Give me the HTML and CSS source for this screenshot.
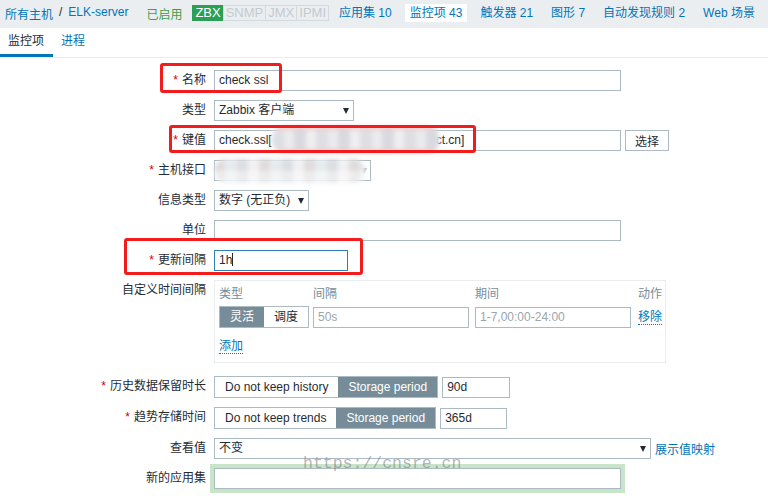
FILE: index.html
```html
<!DOCTYPE html>
<html lang="zh-CN">
<head>
<meta charset="utf-8">
<title>ELK-server 监控项</title>
<link rel="stylesheet" href="styles.css">
</head>
<body>
<header class="hdr">
  <div class="crumbs"><a href="#">所有主机</a><span class="sep">/</span><a href="#">ELK-server</a></div>
  <span class="status">已启用</span>
  <div class="badges"><span class="b zbx">ZBX</span><span class="b">SNMP</span><span class="b">JMX</span><span class="b">IPMI</span></div>
  <nav class="nav">
    <a href="#">应用集 10</a>
    <a href="#" class="cur">监控项 43</a>
    <a href="#">触发器 21</a>
    <a href="#">图形 7</a>
    <a href="#">自动发现规则 2</a>
    <a href="#">Web 场景</a>
  </nav>
</header>
<div class="tabs">
  <span class="tab active">监控项</span>
  <a href="#" class="tab">进程</a>
</div>

<form class="form">
  <label class="lbl"><span class="req">*</span>名称</label>
  <div class="fld"><div class="in w407">check ssl</div></div>

  <label class="lbl">类型</label>
  <div class="fld"><div class="sel w140">Zabbix 客户端<i class="arr"></i></div></div>

  <label class="lbl"><span class="req">*</span>键值</label>
  <div class="fld"><div class="in w407">check.ssl[<span class="gap"></span>ct.cn]</div><button type="button" class="btn">选择</button></div>

  <label class="lbl"><span class="req">*</span>主机接口</label>
  <div class="fld"><div class="sel w157"><i class="arr sm"></i></div></div>

  <label class="lbl">信息类型</label>
  <div class="fld"><div class="sel w95">数字 (无正负)<i class="arr"></i></div></div>

  <label class="lbl">单位</label>
  <div class="fld"><div class="in w407"></div></div>

  <label class="lbl"><span class="req">*</span>更新间隔</label>
  <div class="fld"><div class="in w134 focus">1h<span class="caret"></span></div></div>

  <label class="lbl">自定义时间间隔</label>
  <div class="fld">
    <div class="intervals">
      <div class="igrid">
        <span class="ih">类型</span><span class="ih">间隔</span><span class="ih">期间</span><span class="ih">动作</span>
        <div class="seg"><span class="on">灵活</span><span>调度</span></div>
        <div class="in w156 ph">50s</div>
        <div class="in w156 ph">1-7,00:00-24:00</div>
        <a href="#" class="dl">移除</a>
      </div>
      <a href="#" class="dl add">添加</a>
    </div>
  </div>

  <label class="lbl"><span class="req">*</span>历史数据保留时长</label>
  <div class="fld"><div class="seg big"><span>Do not keep history</span><span class="on">Storage period</span></div><div class="in w68">90d</div></div>

  <label class="lbl"><span class="req">*</span>趋势存储时间</label>
  <div class="fld"><div class="seg big"><span>Do not keep trends</span><span class="on">Storage period</span></div><div class="in w67">365d</div></div>

  <label class="lbl">查看值</label>
  <div class="fld"><div class="sel w437">不变<i class="arr"></i></div><a href="#" class="maplink">展示值映射</a></div>

  <label class="lbl">新的应用集</label>
  <div class="fld"><div class="in w407 green"></div></div>
</form>

<div class="blur blur-key"></div>
<div class="blur blur-if"></div>
<div class="mark m1"></div>
<div class="mark m2"></div>
<div class="mark m3"></div>
<div class="wm">https://cnsre.cn</div>
</body>
</html>
```

FILE: styles.css
```css
* { box-sizing: border-box; }
body {
  margin: 0;
  font-family: "Liberation Sans", Arial, "Noto Sans CJK SC", sans-serif;
  font-size: 12px;
  color: #1f2c33;
  background: #fff;
  position: relative;
  height: 496px;
  overflow: hidden;
}
a { color: #0275b8; text-decoration: none; }

.hdr {
  height: 28px;
  background: #ebeef0;
  display: flex;
  align-items: center;
  padding: 0 0 2px 5px;
  white-space: nowrap;
}
.crumbs { display: flex; gap: 6px; }
.sep { color: #1f2c33; }
.status { color: #429e47; margin-left: 18px; }
.badges { display: flex; margin-left: 10px; font-size: 13px; line-height: 14px; }
.b { border: 1px solid #d3dadd; color: #c2cbd0; padding: 0 2px; margin-left: -1px; }
.b.zbx { background: #2c9e55; border-color: #2c9e55; color: #fff; margin-left: 0; }
.nav { display: flex; gap: 8px; margin-left: 5px; }
.nav a { padding: 0 5px; line-height: 18px; }
.nav a.cur { background: #fff; }

.tabs { display: flex; height: 30px; border-bottom: 1px solid #ebeef0; }
.tab { padding: 1px 9px 0 8px; line-height: 25px; border-bottom: 3px solid transparent; }
.tab.active { border-bottom-color: #0275b8; color: #1f2c33; }

.form {
  display: grid;
  grid-template-columns: 206px auto;
  column-gap: 8px;
  row-gap: 9px;
  padding-top: 12px;
  align-items: start;
}
.lbl { text-align: right; line-height: 21px; white-space: nowrap; }
.req { color: #d40000; margin-right: 4px; }
.fld { display: flex; align-items: center; gap: 4px; }

.in, .sel {
  height: 21px;
  border: 1px solid #acbbc2;
  background: #fff;
  padding: 0 4px;
  line-height: 19px;
  white-space: nowrap;
  overflow: hidden;
  position: relative;
}
.w407 { width: 407px; }
.w140 { width: 140px; }
.w157 { width: 157px; }
.w95 { width: 95px; }
.w134 { width: 134px; }
.w156 { width: 156px; }
.w68 { width: 68px; }
.w67 { width: 67px; }
.w437 { width: 437px; }
.sel { padding-right: 18px; }
.arr {
  position: absolute;
  right: 4px;
  top: 7px;
  width: 0; height: 0;
  border-left: 3.5px solid transparent;
  border-right: 3.5px solid transparent;
  border-top: 6px solid #1f2c33;
}
.arr.sm { border-top-color: #9aa5ab; right: 3px; }
.gap { display: inline-block; width: 164px; }
.focus { border-color: #2f7fb5; }
.caret { display: inline-block; width: 1px; height: 13px; background: #1f2c33; vertical-align: -2px; }
.ph { color: #9aa6ad; }
.green { box-shadow: 0 0 0 4px #c8e5c9; }

.btn {
  height: 21px;
  width: 44px;
  border: 1px solid #acbbc2;
  background: #fff;
  font: inherit;
  color: #1f2c33;
  padding: 0;
}

.intervals {
  width: 452px;
  border: 1px solid #ebeef0;
  padding: 3px 0 8px 4px;
  margin-bottom: 4px;
}
.igrid {
  display: grid;
  grid-template-columns: 94px 162px 163px max-content;
  row-gap: 2px;
  align-items: center;
  white-space: nowrap;
}
.ih { color: #768d99; line-height: 20px; }
.seg { display: flex; height: 22px; border: 1px solid #acbbc2; width: 90px; line-height: 20px; white-space: nowrap; }
.seg span { flex: 1; text-align: center; background: #fff; }
.seg span.on { background: #768d99; color: #fff; }
.seg.big { width: auto; }
.seg.big span { flex: none; padding: 0 10px; }
.dl { border-bottom: 1px dotted #0275b8; line-height: 14px; justify-self: start; }
.add { display: inline-block; margin-top: 11px; }

.blur { position: absolute; filter: blur(2px); border-radius: 12px; }
.blur-key {
  left: 272px; top: 126px; width: 168px; height: 27px;
  background:
    linear-gradient(to bottom, rgba(248,200,200,.9) 0 4px, transparent 4px calc(100% - 4px), rgba(248,200,200,.9) calc(100% - 4px)),
    repeating-linear-gradient(to right, #dedfe3 0 12px, #eaebee 12px 22px, #d8dae0 22px 34px, #eeeff1 34px 44px);
}
.blur-if {
  left: 214px; top: 159px; width: 152px; height: 24px;
  background:
    linear-gradient(to bottom, transparent 0 50%, rgba(255,255,255,.45) 50%),
    repeating-linear-gradient(to right, #e0dcdd 0 11px, #e8ebee 11px 23px, #dcdee2 23px 34px, #f2f1f2 34px 45px);
}
.mark {
  position: absolute;
  border: 3px solid #f21c1c;
  border-radius: 3px;
}
.m1 { left: 160px; top: 63px; width: 122px; height: 30px; }
.m2 { left: 169px; top: 125px; width: 307px; height: 28px; }
.m3 { left: 124px; top: 238px; width: 239px; height: 37px; }
.wm {
  position: absolute;
  left: 303px; top: 454px;
  font-family: "Liberation Mono", "DejaVu Sans Mono", monospace;
  font-size: 16.5px;
  color: rgba(120,120,120,.55);
  pointer-events: none;
}
```
